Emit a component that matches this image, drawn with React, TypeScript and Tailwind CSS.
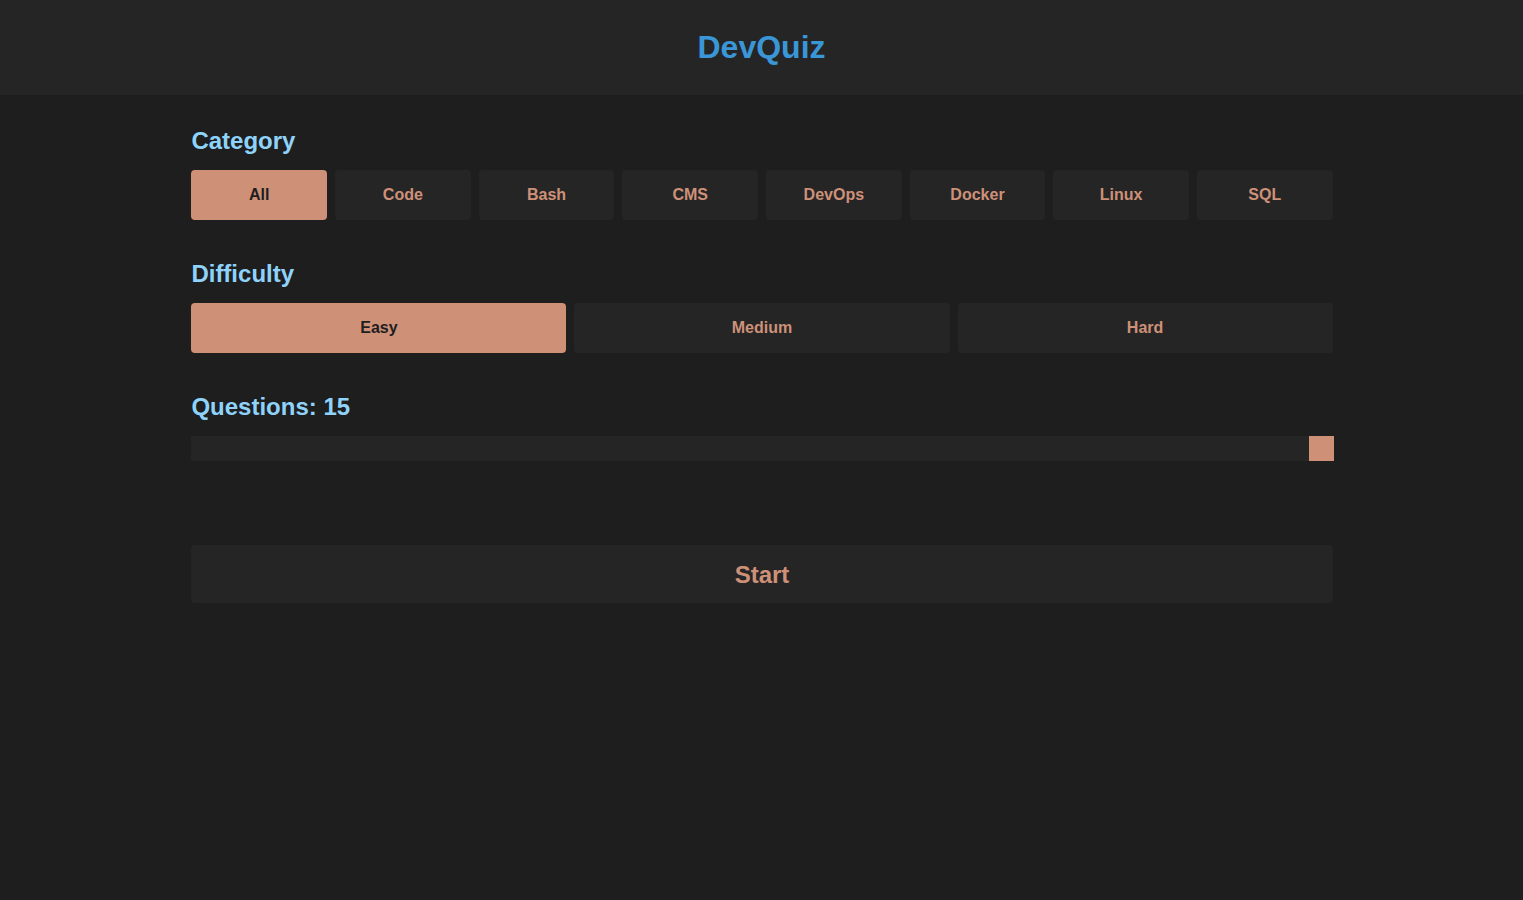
import React, { useState } from "react";

const categories = ["All", "Code", "Bash", "CMS", "DevOps", "Docker", "Linux", "SQL"];
const difficulties = ["Easy", "Medium", "Hard"];

export default function App() {
  const [cat, setCat] = useState("All");
  const [diff, setDiff] = useState("Easy");
  const count = 15;
  const max = 15;
  const min = 5;
  const pct = (count - min) / (max - min);

  return (
    <div
      className="min-h-screen bg-[#1e1e1e] text-[#ce9178]"
      style={{ fontFamily: '"Liberation Sans", Arial, sans-serif' }}
    >
      <header className="h-[95px] bg-[#252526] flex items-center justify-center pb-[2px]">
        <h1 className="text-[32px] font-bold text-[#3a96d6] leading-none">DevQuiz</h1>
      </header>

      <main className="w-3/4 mx-auto pt-[32px] pl-px">
        <section>
          <h2 className="text-[24px] leading-[28px] font-bold text-[#8fd3fb] mb-[15px]">Category</h2>
          <div className="grid grid-cols-8 gap-[8px]">
            {categories.map((c) => (
              <button
                key={c}
                onClick={() => setCat(c)}
                className={
                  "h-[50px] rounded-[4px] text-[16px] font-bold " +
                  (cat === c ? "bg-[#ce9178] text-[#1e1e1e]" : "bg-[#252526] text-[#ce9178]")
                }
              >
                {c}
              </button>
            ))}
          </div>
        </section>

        <section className="mt-[40px]">
          <h2 className="text-[24px] leading-[28px] font-bold text-[#8fd3fb] mb-[15px]">Difficulty</h2>
          <div className="grid grid-cols-3 gap-[8px]">
            {difficulties.map((d) => (
              <button
                key={d}
                onClick={() => setDiff(d)}
                className={
                  "h-[50px] rounded-[4px] text-[16px] font-bold " +
                  (diff === d ? "bg-[#ce9178] text-[#1e1e1e]" : "bg-[#252526] text-[#ce9178]")
                }
              >
                {d}
              </button>
            ))}
          </div>
        </section>

        <section className="mt-[40px]">
          <h2 className="text-[24px] leading-[28px] font-bold text-[#8fd3fb] mb-[15px]">
            Questions: {count}
          </h2>
          <div className="relative h-[25px] bg-[#252526]">
            <div
              className="absolute top-0 h-[25px] w-[25px] bg-[#ce9178]"
              style={{ left: `calc(${pct * 100}% - ${pct * 25}px + 1px)` }}
            />
          </div>
        </section>

        <button className="mt-[84px] w-full h-[58px] rounded-[4px] bg-[#252526] text-[24px] font-bold text-[#ce9178] pt-[2px]">
          Start
        </button>
      </main>
    </div>
  );
}
